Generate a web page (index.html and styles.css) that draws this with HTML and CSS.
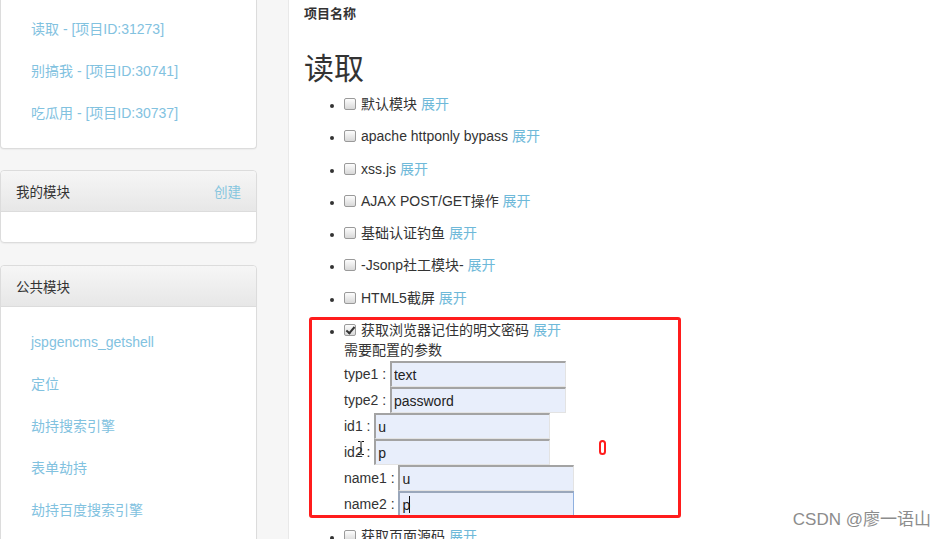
FILE: index.html
```html
<!DOCTYPE html>
<html lang="zh">
<head>
<meta charset="utf-8">
<title>读取</title>
<link rel="stylesheet" href="styles.css">
</head>
<body>
<div class="page">
  <aside class="sidebar">
    <div class="panel panel-top">
      <ul class="links">
        <li><a href="#">读取 - [项目ID:31273]</a></li>
        <li><a href="#">别搞我 - [项目ID:30741]</a></li>
        <li><a href="#">吃瓜用 - [项目ID:30737]</a></li>
      </ul>
    </div>
    <div class="panel panel-mine">
      <div class="panel-head"><span>我的模块</span><a href="#" class="create">创建</a></div>
      <div class="panel-body-empty"></div>
    </div>
    <div class="panel panel-public">
      <div class="panel-head"><span>公共模块</span></div>
      <ul class="links links-public">
        <li><a href="#">jspgencms_getshell</a></li>
        <li><a href="#">定位</a></li>
        <li><a href="#">劫持搜索引擎</a></li>
        <li><a href="#">表单劫持</a></li>
        <li><a href="#">劫持百度搜索引擎</a></li>
      </ul>
    </div>
  </aside>

  <main class="main">
    <div class="proj-label">项目名称</div>
    <h1 class="title">读取</h1>
    <ul class="modules">
      <li><span class="cb"></span>默认模块 <a href="#">展开</a></li>
      <li><span class="cb"></span>apache httponly bypass <a href="#">展开</a></li>
      <li><span class="cb"></span>xss.js <a href="#">展开</a></li>
      <li><span class="cb"></span>AJAX POST/GET操作 <a href="#">展开</a></li>
      <li><span class="cb"></span>基础认证钓鱼 <a href="#">展开</a></li>
      <li><span class="cb"></span>-Jsonp社工模块- <a href="#">展开</a></li>
      <li><span class="cb"></span>HTML5截屏 <a href="#">展开</a></li>
      <li class="open"><span class="cb checked"></span>获取浏览器记住的明文密码 <a href="#">展开</a>
        <div class="cfg-title">需要配置的参数</div>
        <div class="row">type1 : <input class="field" type="text" value="text"></div>
        <div class="row">type2 : <input class="field" type="text" value="password"></div>
        <div class="row">id1 : <input class="field" type="text" value="u"></div>
        <div class="row">id2 : <input class="field" type="text" value="p"></div>
        <div class="row">name1 : <input class="field" type="text" value="u"></div>
        <div class="row">name2 : <span class="focus-wrap"><input class="field focused" type="text" value="p"><span class="caret"></span></span></div>
      </li>
      <li><span class="cb"></span>获取页面源码 <a href="#">展开</a></li>
    </ul>
  </main>

  <div class="annot-box"></div>
  <div class="annot-mark"></div>
  <svg class="ibeam" width="8" height="16" viewBox="0 0 8 16"><path d="M1 1.5h2.5M4.5 1.5h2.5M4 2v12M1 14.5h2.5M4.5 14.5h2.5" stroke="#111" stroke-width="1" fill="none"/></svg>
  <div class="watermark">CSDN @廖一语山</div>
</div>
</body>
</html>
```
FILE: styles.css
```css
* { box-sizing: border-box; }
html, body { margin: 0; padding: 0; }
body {
  font-family: "Liberation Sans", Arial, "Noto Sans CJK SC", sans-serif;
  font-size: 14px;
  color: #333;
  background: #fff;
}
a { text-decoration: none; }

.page {
  position: relative;
  display: flex;
  width: 944px;
  height: 539px;
  overflow: hidden;
}

/* sidebar */
.sidebar {
  width: 289px;
  flex: none;
  background: #f6f6f6;
  border-right: 1px solid #e9e9e9;
}
.panel {
  width: 257px;
  background: #fff;
  border: 1px solid #dcdcdc;
  border-radius: 4px;
  box-shadow: 0 1px 1px rgba(0,0,0,0.04);
}
.panel-top {
  border-top: none;
  border-radius: 0 0 4px 4px;
  height: 149px;
}
.panel-mine { margin-top: 21px; }
.panel-public { margin-top: 22px; height: 300px; }
.panel-head {
  display: flex;
  justify-content: space-between;
  align-items: center;
  height: 41px;
  padding: 0 15px;
  background: linear-gradient(#f6f6f6, #e7e7e7);
  border-bottom: 1px solid #dcdcdc;
  border-radius: 4px 4px 0 0;
  font-size: 13.5px;
  color: #333;
}
.create { color: #86c6df; }
.panel-body-empty { height: 30px; }

.links {
  list-style: none;
  margin: 0;
  padding: 8px 0 0 30px;
}
.links li {
  height: 42px;
  line-height: 42px;
}
.links a { color: #82c2df; font-size: 14px; }
.links-public { padding-top: 14px; }

/* main */
.main {
  flex: 1;
  padding-left: 15px;
}
.proj-label {
  font-size: 13px;
  font-weight: bold;
  line-height: 20px;
  padding-top: 4px;
}
.title {
  margin: 22px 0 0;
  font-size: 30px;
  font-weight: normal;
  line-height: 40px;
  font-family: "Noto Sans CJK SC", sans-serif;
  color: #333;
}
.modules {
  margin: 8px 0 0;
  padding-left: 40px;
  list-style: disc;
}
.modules li {
  line-height: 20px;
  margin-bottom: 12.3px;
}
.modules li::marker { font-size: 12px; }
.modules a { color: #6fb9d9; }
.modules li.open { margin-bottom: 9px; }

.cb {
  display: inline-block;
  width: 12px;
  height: 12px;
  margin-right: 5px;
  vertical-align: -1px;
  border: 1px solid #9a9a9a;
  border-radius: 2px;
  background: linear-gradient(#fdfdfd, #d8d8d8);
  position: relative;
}
.cb.checked::after {
  content: "";
  position: absolute;
  left: 3px;
  top: 0px;
  width: 3px;
  height: 7px;
  border-right: 2px solid #333;
  border-bottom: 2px solid #333;
  transform: rotate(40deg);
}

.cfg-title {
  line-height: 21px;
}
.row {
  height: 26px;
  line-height: 26px;
  white-space: nowrap;
}
.field {
  width: 176px;
  height: 26px;
  margin: 0;
  padding: 0 2px;
  vertical-align: top;
  font-family: "Liberation Sans", Arial, sans-serif;
  font-size: 14px;
  color: #222;
  background: #e8eefb;
  border-top: 2px solid #a3a3a3;
  border-left: 2px solid #a3a3a3;
  border-right: 1px solid #e3e3e3;
  border-bottom: 1px solid #e3e3e3;
  outline: none;
}
.field.focused {
  border: 1px solid #8fb0df;
  border-top: 2px solid #9aa7bb;
  border-left: 2px solid #9aa7bb;
}
.focus-wrap {
  position: relative;
  display: inline-block;
  vertical-align: top;
}
.caret {
  position: absolute;
  left: 11px;
  top: 5px;
  width: 1px;
  height: 17px;
  background: #111;
}

/* annotations */
.annot-box {
  position: absolute;
  left: 309px;
  top: 317px;
  width: 372px;
  height: 201px;
  border: 3px solid #ff1c1c;
  border-radius: 3px;
}
.annot-mark {
  position: absolute;
  left: 599px;
  top: 440px;
  width: 7px;
  height: 15px;
  border: 2px solid #ff1c1c;
  border-radius: 4px;
}
.ibeam {
  position: absolute;
  left: 357px;
  top: 440px;
}
.watermark {
  position: absolute;
  right: 13px;
  bottom: 8px;
  font-size: 17px;
  color: #8c8c8c;
  font-family: "Liberation Sans", "Noto Sans CJK SC", sans-serif;
  line-height: 22px;
}
```
